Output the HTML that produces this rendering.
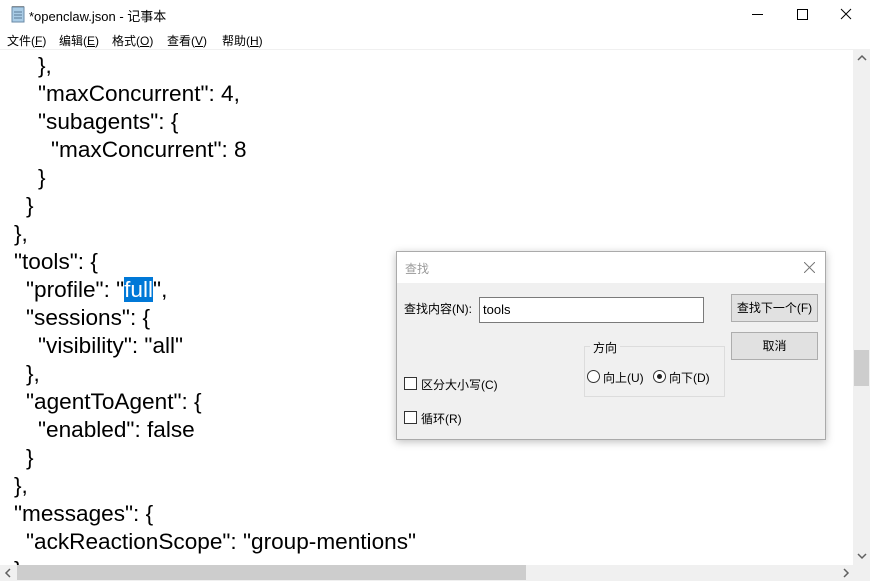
<!DOCTYPE html>
<html><head><meta charset="utf-8">
<style>
*{margin:0;padding:0;box-sizing:border-box}
body{width:870px;height:581px;overflow:hidden;background:#fff;position:relative;font-family:"Liberation Sans","Noto Sans CJK SC",sans-serif}
.t{position:absolute;left:29px;top:6px;font-size:13px;color:#000}
.menu{position:absolute;top:32px;font-size:12px;color:#000}
.ed{position:absolute;left:0;top:49px;width:854px;height:516px;border-top:1px solid #f0f0f0;overflow:hidden}
.l{position:absolute;font-size:22.6px;line-height:28px;white-space:pre;color:#000}
.sel{background:#0078d7;color:#fff}
.dlg{position:absolute;left:396px;top:251px;width:430px;height:189px;background:#f0f0f0;border:1px solid #aaa;box-shadow:0 2px 8px rgba(0,0,0,.25);font-size:12px;color:#000}
.dt{position:absolute;left:0;top:0;width:428px;height:31px;background:#fff}
.btn{position:absolute;width:87px;height:28px;background:#e1e1e1;border:1px solid #adadad;text-align:center;line-height:26px;font-size:12px}
.cb{position:absolute;width:13px;height:13px;border:1px solid #333;background:#fff}
.rd{position:absolute;width:13px;height:13px;border:1px solid #333;border-radius:50%;background:#fff}
</style></head><body>
<svg style="position:absolute;left:10px;top:5px" width="16" height="18" viewBox="0 0 16 18"><rect x="2" y="2" width="12" height="15" fill="#a9cce6" stroke="#6a8aa6"/><path d="M4 7h8M4 10h8M4 13h8" stroke="#5a7a96"/><path d="M3 2v-1M5 2v-1M7 2v-1M9 2v-1M11 2v-1M13 2v-1" stroke="#555"/></svg>
<div class="t">*openclaw.json - 记事本</div>
<svg style="position:absolute;left:752px;top:8px" width="110" height="14"><path d="M0 6.5h11" stroke="#000"/><rect x="45.5" y="1.5" width="10" height="10" fill="none" stroke="#000"/><path d="M89 1l10 10M99 1l-10 10" stroke="#000"/></svg>
<div class="menu" style="left:7px">文件(<u>F</u>)</div>
<div class="menu" style="left:59px">编辑(<u>E</u>)</div>
<div class="menu" style="left:112px">格式(<u>O</u>)</div>
<div class="menu" style="left:167px">查看(<u>V</u>)</div>
<div class="menu" style="left:222px">帮助(<u>H</u>)</div>
<div class="ed">
<div class="l" style="left:38px;top:2px">},</div>
<div class="l" style="left:38px;top:30px">"maxConcurrent": 4,</div>
<div class="l" style="left:38px;top:58px">"subagents": {</div>
<div class="l" style="left:51px;top:86px">"maxConcurrent": 8</div>
<div class="l" style="left:38px;top:114px">}</div>
<div class="l" style="left:26px;top:142px">}</div>
<div class="l" style="left:14px;top:170px">},</div>
<div class="l" style="left:14px;top:198px">"tools": {</div>
<div class="l" style="left:26px;top:226px">"profile": "<span class="sel">full</span>",</div>
<div class="l" style="left:26px;top:254px">"sessions": {</div>
<div class="l" style="left:38px;top:282px">"visibility": "all"</div>
<div class="l" style="left:26px;top:310px">},</div>
<div class="l" style="left:26px;top:338px">"agentToAgent": {</div>
<div class="l" style="left:38px;top:366px">"enabled": false</div>
<div class="l" style="left:26px;top:394px">}</div>
<div class="l" style="left:14px;top:422px">},</div>
<div class="l" style="left:14px;top:450px">"messages": {</div>
<div class="l" style="left:26px;top:478px">"ackReactionScope": "group-mentions"</div>
<div class="l" style="left:14px;top:506px">},</div>
</div>
<div style="position:absolute;left:853px;top:49px;width:17px;height:516px;background:#f0f0f0"></div>
<div style="position:absolute;left:854px;top:350px;width:15px;height:36px;background:#cdcdcd"></div>
<svg style="position:absolute;left:857px;top:54px" width="10" height="8"><path d="M1 6l4-4 4 4" stroke="#606060" stroke-width="1.5" fill="none"/></svg>
<svg style="position:absolute;left:857px;top:552px" width="10" height="8"><path d="M1 2l4 4 4-4" stroke="#606060" stroke-width="1.5" fill="none"/></svg>
<div style="position:absolute;left:0;top:565px;width:853px;height:16px;background:#f0f0f0"></div>
<div style="position:absolute;left:17px;top:565px;width:509px;height:15px;background:#cdcdcd"></div>
<svg style="position:absolute;left:4px;top:568px" width="8" height="10"><path d="M6 1l-4 4 4 4" stroke="#606060" stroke-width="1.5" fill="none"/></svg>
<svg style="position:absolute;left:842px;top:568px" width="8" height="10"><path d="M2 1l4 4-4 4" stroke="#606060" stroke-width="1.5" fill="none"/></svg>
<div style="position:absolute;left:853px;top:565px;width:17px;height:16px;background:#f0f0f0"></div>

<div class="dlg">
<div class="dt"></div>
<div style="position:absolute;left:8px;top:8px;font-size:12px;color:#999">查找</div>
<svg style="position:absolute;left:407px;top:10px" width="11" height="11"><path d="M0 0l11 11M11 0l-11 11" stroke="#777"/></svg>
<div style="position:absolute;left:7px;top:48px">查找内容(N):</div>
<div style="position:absolute;left:82px;top:45px;width:225px;height:26px;background:#fff;border:1px solid #7a7a7a;padding:4px 3px;font-size:13px">tools</div>
<div class="btn" style="left:334px;top:42px">查找下一个(F)</div>
<div class="btn" style="left:334px;top:80px">取消</div>
<div style="position:absolute;left:187px;top:94px;width:141px;height:51px;border:1px solid #dcdcdc"></div>
<div style="position:absolute;left:193px;top:87px;background:#f0f0f0;padding:0 3px">方向</div>
<div class="rd" style="left:190px;top:118px"></div>
<div style="position:absolute;left:206px;top:117px">向上(U)</div>
<div class="rd" style="left:256px;top:118px"><div style="position:absolute;left:3px;top:3px;width:5px;height:5px;border-radius:50%;background:#222"></div></div>
<div style="position:absolute;left:272px;top:117px">向下(D)</div>
<div class="cb" style="left:7px;top:125px"></div>
<div style="position:absolute;left:24px;top:124px">区分大小写(C)</div>
<div class="cb" style="left:7px;top:159px"></div>
<div style="position:absolute;left:24px;top:158px">循环(R)</div>
</div>
</body></html>
